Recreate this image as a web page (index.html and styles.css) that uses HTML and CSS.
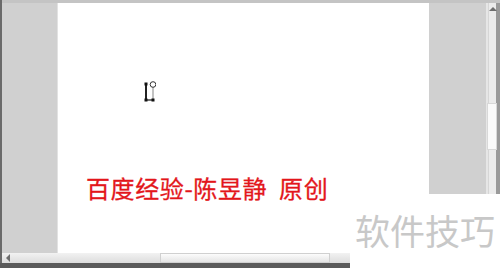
FILE: index.html
```html
<!DOCTYPE html>
<html lang="zh">
<head>
<meta charset="utf-8">
<link rel="stylesheet" href="styles.css">
</head>
<body>
<div class="window">
  <div class="topstrip"></div>
  <div class="main">
    <div class="edge"></div>
    <div class="gutter-left"></div>
    <div class="page">
      <svg class="cursor" width="12" height="22" viewBox="0 0 12 22">
        <line x1="2" y1="3" x2="2" y2="19" stroke="#222" stroke-width="2"/>
        <line x1="9" y1="6" x2="9" y2="19" stroke="#999" stroke-width="1.2"/>
        <line x1="2" y1="19" x2="9" y2="19" stroke="#444" stroke-width="1.5"/>
        <rect x="0.5" y="1.5" width="3" height="3" fill="#111"/>
        <rect x="0.5" y="17.5" width="3" height="3" fill="#111"/>
        <rect x="7.5" y="17.5" width="3" height="3" fill="#111"/>
        <circle cx="9" cy="3.5" r="2.8" fill="#fff" stroke="#333" stroke-width="1"/>
      </svg>
      <div class="credit">百度经验-陈昱静&nbsp; 原创</div>
    </div>
    <div class="gutter-right"></div>
    <div class="vscroll">
      <div class="arrow-up"></div>
      <div class="vtrack">
        <div class="vthumb"></div>
      </div>
    </div>
  </div>
  <div class="hscroll">
    <div class="arrow-left"></div>
    <div class="htrack">
      <div class="hthumb"></div>
    </div>
  </div>
  <div class="bottomstrip"></div>
  <div class="watermark">软件技巧</div>
</div>
</body>
</html>
```

FILE: styles.css
```css
html, body {
  margin: 0;
  padding: 0;
}
body {
  width: 500px;
  height: 268px;
  overflow: hidden;
  background: #d0d0d0;
  font-family: "Noto Sans CJK SC", "Noto Sans", sans-serif;
}
.window {
  position: relative;
  width: 500px;
  height: 268px;
  display: flex;
  flex-direction: column;
}
.topstrip {
  height: 3px;
  background: #c4c4c4;
  border-left: 2px solid #6a6a6a;
}
.main {
  flex: 1;
  display: flex;
}
.edge {
  width: 2px;
  background: #6a6a6a;
}
.gutter-left {
  width: 55px;
  background: #d0d0d0;
  border-right: 1px solid #e2e2e2;
}
.page {
  width: 371px;
  background: #ffffff;
  position: relative;
}
.cursor {
  position: absolute;
  left: 86px;
  top: 78px;
}
.credit {
  position: absolute;
  left: 28px;
  top: 170px;
  color: #e3161b;
  font-size: 24px;
  letter-spacing: 0.6px;
  line-height: 30px;
  white-space: nowrap;
  -webkit-text-stroke: 0.3px #e3161b;
}
.gutter-right {
  width: 57px;
  background: #d0d0d0;
}
.vscroll {
  width: 14px;
  display: flex;
  flex-direction: column;
  background: linear-gradient(to right, #e6e6e6 0 2px, #d6d6d6 2px 3px, #ebebeb 3px 10px, #9a9a9a 10px 14px);
}
.arrow-up {
  height: 12px;
  position: relative;
}
.arrow-up::after {
  content: "";
  position: absolute;
  left: 3px;
  top: 4px;
  border-left: 4px solid transparent;
  border-right: 4px solid transparent;
  border-bottom: 4px solid #6e6e6e;
}
.vtrack {
  flex: 1;
  padding-top: 88px;
}
.vthumb {
  margin-left: 1px;
  width: 8px;
  height: 45px;
  background: #fafafa;
  border: 1px solid #d8d8d8;
}
.hscroll {
  height: 10px;
  display: flex;
  background: linear-gradient(to bottom, #f2f2f2, #dcdcdc);
  border-left: 2px solid #6a6a6a;
}
.arrow-left {
  width: 12px;
  position: relative;
}
.arrow-left::after {
  content: "";
  position: absolute;
  left: 4px;
  top: 1px;
  border-top: 4px solid transparent;
  border-bottom: 4px solid transparent;
  border-right: 4px solid #6e6e6e;
}
.htrack {
  flex: 1;
  padding-left: 146px;
}
.hthumb {
  width: 168px;
  height: 8px;
  background: linear-gradient(to bottom, #fcfcfc, #e4e4e4);
  border: 1px solid #d0d0d0;
}
.bottomstrip {
  height: 5px;
  background: #5a5a5a;
}
.watermark {
  position: absolute;
  left: 350px;
  top: 194px;
  width: 150px;
  height: 74px;
  background: #ffffff;
  color: #c8c8c8;
  font-size: 35px;
  line-height: 1;
  padding: 18px 0 0 5px;
  box-sizing: border-box;
  white-space: nowrap;
}
```
